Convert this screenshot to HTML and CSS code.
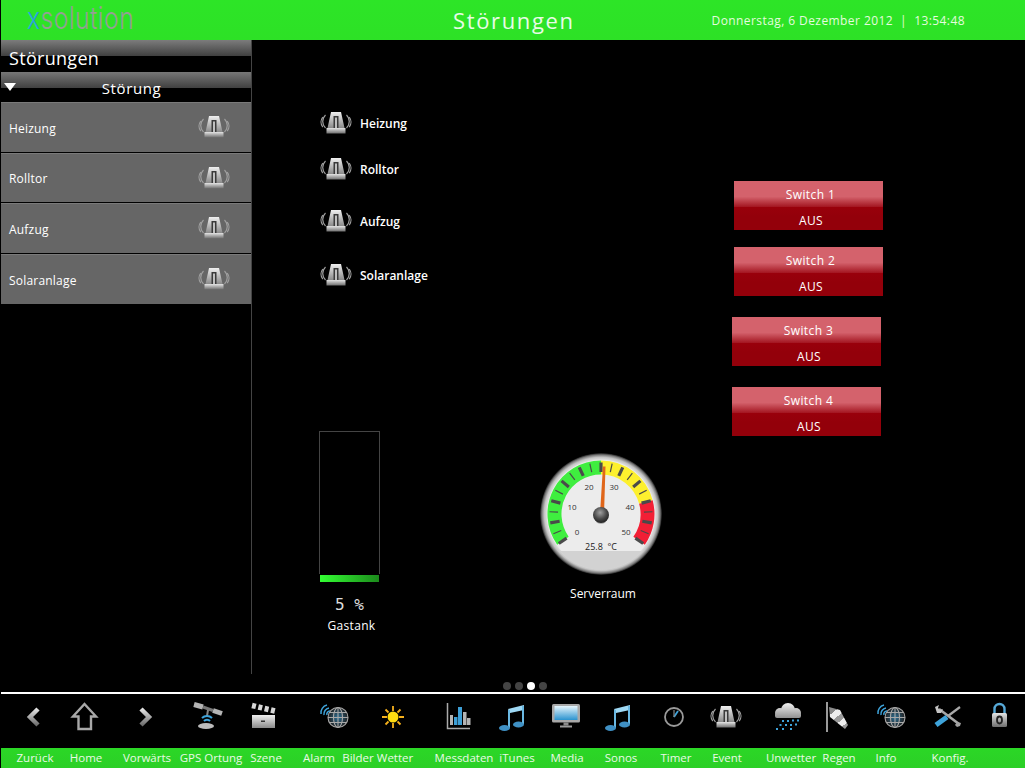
FILE: index.html
```html
<!DOCTYPE html>
<html lang="de">
<head>
<meta charset="utf-8">
<title>Störungen</title>
<link rel="stylesheet" href="styles.css">
</head>
<body>
<svg class="defs" width="0" height="0" aria-hidden="true">
  <defs>
    <linearGradient id="gGray" x1="0" y1="0" x2="0" y2="1"><stop offset="0" stop-color="#e4e4e4"/><stop offset="1" stop-color="#6e6e6e"/></linearGradient>
    <linearGradient id="gDome" x1="0" y1="0" x2="0" y2="1"><stop offset="0" stop-color="#f0f0f0"/><stop offset="1" stop-color="#8a8a8a"/></linearGradient>
    <linearGradient id="gBlue" x1="0" y1="0" x2="0" y2="1"><stop offset="0" stop-color="#a8dcf5"/><stop offset="1" stop-color="#2f86bd"/></linearGradient>
    <linearGradient id="gScreen" x1="0" y1="0" x2="0" y2="1"><stop offset="0" stop-color="#e6f5fc"/><stop offset="1" stop-color="#2a93cf"/></linearGradient>
    <linearGradient id="gCloud" gradientUnits="userSpaceOnUse" x1="0" y1="2" x2="0" y2="18"><stop offset="0" stop-color="#f2f2f2"/><stop offset="1" stop-color="#8b8b8b"/></linearGradient>
    <linearGradient id="gSock" gradientUnits="userSpaceOnUse" x1="10" y1="6" x2="27" y2="27"><stop offset="0" stop-color="#8a8a8a"/><stop offset=".2" stop-color="#8a8a8a"/><stop offset=".2" stop-color="#eee"/><stop offset=".42" stop-color="#eee"/><stop offset=".42" stop-color="#9a9a9a"/><stop offset=".62" stop-color="#9a9a9a"/><stop offset=".62" stop-color="#eee"/><stop offset=".82" stop-color="#eee"/><stop offset=".82" stop-color="#999"/></linearGradient>
    <radialGradient id="gGlobe" cx=".5" cy=".5" r=".5"><stop offset="0" stop-color="#2c6f94"/><stop offset="1" stop-color="#222"/></radialGradient>
    <radialGradient id="gHub" cx=".45" cy=".35" r=".65"><stop offset="0" stop-color="#a0a0a0"/><stop offset=".6" stop-color="#4a4a4a"/><stop offset="1" stop-color="#222"/></radialGradient>
    <radialGradient id="gRim" cx=".5" cy=".5" r=".5"><stop offset=".88" stop-color="#e6e6e6"/><stop offset=".93" stop-color="#c4c4c4"/><stop offset=".97" stop-color="#777"/><stop offset="1" stop-color="#111"/></radialGradient>

    <symbol id="i-siren" viewBox="0 0 32 32">
      <path d="M11 5h10l3.500 16h-17z" fill="url(#gDome)"/>
      <rect x="13.500" y="9" width="5" height="12" fill="#3a3a3a"/>
      <rect x="15" y="10.500" width="2" height="10.500" fill="#c0c0c0"/>
      <rect x="6.500" y="21" width="19" height="5.500" fill="url(#gGray)"/>
      <g fill="none" stroke="#a0a0a0" stroke-width="1.200">
        <path d="M5.500 8a9 9 0 0 0 0 13"/><path d="M2.800 10a8 8 0 0 0 0 10"/>
        <path d="M26.500 8a9 9 0 0 1 0 13"/><path d="M29.200 10a8 8 0 0 1 0 10"/>
      </g>
    </symbol>
    <symbol id="i-back" viewBox="0 0 32 32"><path d="M20 8l-8 8 8 8" fill="none" stroke="url(#gGray)" stroke-width="4.500"/></symbol>
    <symbol id="i-fwd" viewBox="0 0 32 32"><path d="M12 8l8 8-8 8" fill="none" stroke="url(#gGray)" stroke-width="4.500"/></symbol>
    <symbol id="i-home" viewBox="0 0 32 32"><path d="M15.500 3L27 15.500h-5V28H9.500V15.500H4z" fill="none" stroke="#a8a8a8" stroke-width="2.400"/></symbol>
    <symbol id="i-sat" viewBox="0 0 32 32">
      <path d="M2 3.500l9 2.500M21 9.500l9 3" stroke="#b4b4b4" stroke-width="5" fill="none"/>
      <path d="M11 6l10 3.500" stroke="#777" stroke-width="3" fill="none"/>
      <path d="M16 9l-1 6" stroke="#888" stroke-width="2" fill="none"/>
      <path d="M10 17a7 7 0 0 1 10 0M12 20a4 4 0 0 1 6 0" stroke="#3ea3da" stroke-width="2" fill="none"/>
      <ellipse cx="14" cy="25" rx="8" ry="3" fill="#bcbcbc"/>
    </symbol>
    <symbol id="i-clap" viewBox="0 0 32 32">
      <rect x="5" y="14" width="23" height="13" fill="url(#gDome)"/>
      <rect x="14" y="19.500" width="4" height="1.500" fill="#333"/>
      <path d="M5 4.500L28 10" stroke="#d8d8d8" stroke-width="5.500" stroke-dasharray="4 2.500" fill="none"/>
    </symbol>
    <symbol id="i-globe" viewBox="0 0 32 32">
      <circle cx="20" cy="16.500" r="10" fill="url(#gGlobe)"/>
      <g fill="none" stroke="#a8a8a8" stroke-width="1.100">
        <circle cx="20" cy="16.500" r="10"/>
        <ellipse cx="20" cy="16.500" rx="4.500" ry="10"/>
        <path d="M20 6.500v20M10 16.500h20M11.500 11.500h17M11.500 21.500h17"/>
      </g>
      <g fill="none" stroke="#3ea3da" stroke-width="1.500">
        <path d="M3 13a8 8 0 0 1 6-9"/><path d="M6 14a6 6 0 0 1 5-7"/><path d="M9 14a3 3 0 0 1 3-4"/>
      </g>
    </symbol>
    <symbol id="i-sun" viewBox="0 0 32 32">
      <g stroke-width="1.800">
        <path d="M16 5v5M16 22v5M5 16h5M22 16h5M8.500 8.500l3 3M20.500 20.500l3 3M8.500 23.500l3-3M20.500 11.500l3-3" stroke="#f6b01c"/>
      </g>
      <circle cx="16" cy="16" r="5.500" fill="#ffdc10"/>
    </symbol>
    <symbol id="i-chart" viewBox="0 0 32 32">
      <path d="M4.500 2v25.500H27" fill="none" stroke="#aaa" stroke-width="1.500"/>
      <rect x="7" y="14" width="3" height="10" fill="#b4b4b4"/>
      <rect x="11" y="16" width="3.500" height="8" fill="#3e9fd6"/>
      <rect x="15" y="6" width="4" height="18" fill="#3e9fd6"/>
      <rect x="20" y="11" width="3.500" height="13" fill="#b4b4b4"/>
      <rect x="24" y="17" width="3.500" height="7" fill="#b4b4b4"/>
    </symbol>
    <symbol id="i-note" viewBox="0 0 32 32">
      <path d="M12 8l16-4v5l-14 3z" fill="#9ed8f4"/>
      <rect x="12" y="9" width="2" height="18" fill="#6ab8e2"/>
      <rect x="26" y="5" width="2" height="18" fill="#6ab8e2"/>
      <ellipse cx="8.500" cy="27" rx="5.500" ry="3" fill="#3f90c4"/>
      <ellipse cx="22.500" cy="23.500" rx="5.500" ry="3" fill="#3f90c4"/>
    </symbol>
    <symbol id="i-monitor" viewBox="0 0 32 32">
      <rect x="2" y="3" width="28" height="18.500" rx="1.500" fill="#a8a8a8"/>
      <rect x="4.500" y="5" width="23" height="14" fill="url(#gScreen)"/>
      <rect x="13.500" y="21.500" width="5" height="3" fill="#8a8a8a"/>
      <rect x="10" y="24.500" width="12" height="2" fill="#9a9a9a"/>
    </symbol>
    <symbol id="i-clock" viewBox="0 0 32 32">
      <circle cx="16" cy="16" r="9" fill="none" stroke="#9a9a9a" stroke-width="1.800"/>
      <path d="M16 16l4-6" stroke="#3ea3da" stroke-width="1.800"/>
      <path d="M16 16V9" stroke="#888" stroke-width="1.200"/>
    </symbol>
    <symbol id="i-cloud" viewBox="0 0 32 32">
      <g fill="url(#gCloud)">
        <circle cx="8" cy="12" r="5"/><circle cx="16" cy="9" r="7"/><circle cx="24" cy="12" r="5"/>
        <rect x="3" y="12" width="26" height="5" rx="2"/>
      </g>
      <g fill="#3ea3da">
        <rect x="10" y="19" width="2" height="2"/><rect x="15" y="19" width="2" height="2"/><rect x="20" y="18.500" width="2" height="2"/><rect x="25" y="18.500" width="2" height="2"/>
        <rect x="7.500" y="23" width="2" height="2"/><rect x="13" y="23" width="2" height="2"/><rect x="18" y="23" width="2" height="2"/><rect x="23" y="22.500" width="2" height="2"/>
        <rect x="4" y="27" width="2" height="2"/><rect x="10" y="27" width="2" height="2"/><rect x="18" y="27" width="2" height="2"/>
      </g>
    </symbol>
    <symbol id="i-wind" viewBox="0 0 32 32">
      <path d="M6 1v30" stroke="#9a9a9a" stroke-width="2"/>
      <path d="M8 6l11 3 8 15-3 4L9 16z" fill="url(#gSock)"/>
    </symbol>
    <symbol id="i-tools" viewBox="0 0 32 32">
      <path d="M8 8l20 15" stroke="#a8a8a8" stroke-width="2.600" fill="none"/>
      <path d="M4 6l4-2-1 3 2 2 3-1-2 4-4 0z" fill="#c4c4c4"/>
      <path d="M26 21l4 1-1 3-3 1-2-2z" fill="#a0a0a0"/>
      <path d="M29 6L17 15" stroke="#a8a8a8" stroke-width="2.200" fill="none"/>
      <path d="M16 16L5 24" stroke="#3ea3da" stroke-width="5" fill="none"/>
    </symbol>
    <symbol id="i-lock" viewBox="0 0 32 32">
      <path d="M12.500 13V8a5 5 0 0 1 10 0v5" fill="none" stroke="#56a9d8" stroke-width="2.400"/>
      <rect x="10" y="12" width="15" height="14" rx="1.500" fill="url(#gGray)"/>
      <ellipse cx="17.500" cy="19" rx="2.500" ry="3.500" fill="none" stroke="#222" stroke-width="1.800"/>
    </symbol>
    <line id="tick-major" x1="61" y1="9.500" x2="61" y2="19" stroke="#4a4a4a" stroke-width="3.200"/>
    <line id="tick-minor" x1="61" y1="9.500" x2="61" y2="18" stroke="#4a4a4a" stroke-width="1.200"/>
  </defs>
</svg>

<header class="topbar">
  <div class="logo"><span class="logo-x">x</span>solution</div>
  <h1 class="page-title">Störungen</h1>
  <div class="clock">Donnerstag, 6 Dezember 2012&nbsp; | &nbsp;13:54:48</div>
</header>

<main class="main">
  <aside class="sidebar">
    <div class="side-title">Störungen</div>
    <div class="side-section"><span class="tri"></span>Störung</div>
    <div class="side-row"><span>Heizung</span><svg class="ico"><use href="#i-siren"/></svg></div>
    <div class="side-row"><span>Rolltor</span><svg class="ico"><use href="#i-siren"/></svg></div>
    <div class="side-row"><span>Aufzug</span><svg class="ico"><use href="#i-siren"/></svg></div>
    <div class="side-row"><span>Solaranlage</span><svg class="ico"><use href="#i-siren"/></svg></div>
  </aside>

  <section class="stage">
    <div class="alarm a1"><svg class="ico"><use href="#i-siren"/></svg><span>Heizung</span></div>
    <div class="alarm a2"><svg class="ico"><use href="#i-siren"/></svg><span>Rolltor</span></div>
    <div class="alarm a3"><svg class="ico"><use href="#i-siren"/></svg><span>Aufzug</span></div>
    <div class="alarm a4"><svg class="ico"><use href="#i-siren"/></svg><span>Solaranlage</span></div>

    <div class="switch s1"><div class="sw-top">Switch 1</div><div class="sw-bot">AUS</div></div>
    <div class="switch s2"><div class="sw-top">Switch 2</div><div class="sw-bot">AUS</div></div>
    <div class="switch s3"><div class="sw-top">Switch 3</div><div class="sw-bot">AUS</div></div>
    <div class="switch s4"><div class="sw-top">Switch 4</div><div class="sw-bot">AUS</div></div>

    <div class="tank">
      <div class="tank-frame"></div>
      <div class="tank-fill"></div>
      <div class="tank-val">5 %</div>
      <div class="tank-name">Gastank</div>
    </div>

    <div class="gauge">
      <svg class="gauge-svg" width="122" height="122" viewBox="0 0 122 122">
        <circle cx="61" cy="61" r="61" fill="url(#gRim)"/>
        <circle cx="61" cy="61" r="54" fill="#ececec"/>
        <path d="M22.900 87.700A46.500 46.500 0 0 1 61 14.500" fill="none" stroke="#3fee3f" stroke-width="14"/>
        <path d="M61 14.500A46.500 46.500 0 0 1 105.900 49" fill="none" stroke="#fdf02e" stroke-width="14"/>
        <path d="M105.900 49A46.500 46.500 0 0 1 99.100 87.700" fill="none" stroke="#f21f35" stroke-width="14"/>
        <g>
          <use href="#tick-major" transform="rotate(-125 61 61)"/><use href="#tick-minor" transform="rotate(-112.500 61 61)"/>
          <use href="#tick-major" transform="rotate(-100 61 61)"/><use href="#tick-minor" transform="rotate(-87.500 61 61)"/>
          <use href="#tick-major" transform="rotate(-75 61 61)"/><use href="#tick-minor" transform="rotate(-62.500 61 61)"/>
          <use href="#tick-major" transform="rotate(-50 61 61)"/><use href="#tick-minor" transform="rotate(-37.500 61 61)"/>
          <use href="#tick-major" transform="rotate(-25 61 61)"/><use href="#tick-minor" transform="rotate(-12.500 61 61)"/>
          <use href="#tick-major"/><use href="#tick-minor" transform="rotate(12.500 61 61)"/>
          <use href="#tick-major" transform="rotate(25 61 61)"/><use href="#tick-minor" transform="rotate(37.500 61 61)"/>
          <use href="#tick-major" transform="rotate(50 61 61)"/><use href="#tick-minor" transform="rotate(62.500 61 61)"/>
          <use href="#tick-major" transform="rotate(75 61 61)"/><use href="#tick-minor" transform="rotate(87.500 61 61)"/>
          <use href="#tick-major" transform="rotate(100 61 61)"/><use href="#tick-minor" transform="rotate(112.500 61 61)"/>
          <use href="#tick-major" transform="rotate(125 61 61)"/>
        </g>
        <path d="M20 98h82A55 55 0 0 1 20 98z" fill="#d2d2d2"/>
        <g class="gauge-num">
          <text x="37" y="82">0</text><text x="32" y="57">10</text><text x="49" y="37">20</text>
          <text x="74" y="37">30</text><text x="90" y="57">40</text><text x="86" y="82">50</text>
        </g>
        <text class="gauge-read" x="61" y="97">25.8 &#160;°C</text>
        <path d="M60 61L63 13.500h2.500L64 61z" fill="#e0661a"/>
        <ellipse cx="61" cy="68" rx="5" ry="3" fill="#888" opacity=".6"/>
        <circle cx="61" cy="62" r="8" fill="url(#gHub)"/>
      </svg>
      <div class="gauge-name">Serverraum</div>
    </div>
  </section>

  <div class="dots"><i></i><i></i><i class="on"></i><i></i></div>
</main>

<nav class="toolbar">
  <div class="iconrow">
    <div class="cell"><svg class="tb"><use href="#i-back"/></svg></div>
    <div class="cell"><svg class="tb"><use href="#i-home"/></svg></div>
    <div class="cell"><svg class="tb"><use href="#i-fwd"/></svg></div>
    <div class="cell"><svg class="tb"><use href="#i-sat"/></svg></div>
    <div class="cell"><svg class="tb"><use href="#i-clap"/></svg></div>
    <div class="cell"><svg class="tb"><use href="#i-globe"/></svg></div>
    <div class="cell"><svg class="tb"><use href="#i-sun"/></svg></div>
    <div class="cell"><svg class="tb"><use href="#i-chart"/></svg></div>
    <div class="cell"><svg class="tb"><use href="#i-note"/></svg></div>
    <div class="cell"><svg class="tb"><use href="#i-monitor"/></svg></div>
    <div class="cell"><svg class="tb"><use href="#i-note"/></svg></div>
    <div class="cell"><svg class="tb"><use href="#i-clock"/></svg></div>
    <div class="cell"><svg class="tb"><use href="#i-siren"/></svg></div>
    <div class="cell"><svg class="tb"><use href="#i-cloud"/></svg></div>
    <div class="cell"><svg class="tb"><use href="#i-wind"/></svg></div>
    <div class="cell"><svg class="tb"><use href="#i-globe"/></svg></div>
    <div class="cell"><svg class="tb"><use href="#i-tools"/></svg></div>
    <div class="cell"><svg class="tb"><use href="#i-lock"/></svg></div>
  </div>
  <div class="labelrow">
    <div class="cell"><span>Zurück</span></div>
    <div class="cell"><span>Home</span></div>
    <div class="cell"><span>Vorwärts</span></div>
    <div class="cell"><span>GPS Ortung</span></div>
    <div class="cell"><span>Szene</span></div>
    <div class="cell"><span>Alarm</span></div>
    <div class="cell"><span>Bilder</span></div>
    <div class="cell"><span>Wetter</span></div>
    <div class="cell"><span>Messdaten</span></div>
    <div class="cell"><span>iTunes</span></div>
    <div class="cell"><span>Media</span></div>
    <div class="cell"><span>Sonos</span></div>
    <div class="cell"><span>Timer</span></div>
    <div class="cell"><span>Event</span></div>
    <div class="cell"><span>Unwetter</span></div>
    <div class="cell"><span>Regen</span></div>
    <div class="cell"><span>Info</span></div>
    <div class="cell"><span>Konfig.</span></div>
  </div>
</nav>
</body>
</html>
```
FILE: styles.css
```css
* { box-sizing: border-box; }
html, body { margin: 0; height: 100%; background: #000; }
body {
  width: 1025px;
  height: 768px;
  overflow: hidden;
  display: flex;
  flex-direction: column;
  color: #fff;
  font-family: "Open Sans", "Noto Sans", "Liberation Sans", sans-serif;
  font-size: 12px;
}
.defs { position: absolute; }

/* top bar */
.topbar {
  flex: 0 0 40px;
  margin-left: 1px;
  display: flex;
  align-items: center;
  position: relative;
  background: linear-gradient(#2de527, #2de126);
}
.logo {
  margin-left: 26px;
  margin-top: -4px;
  font-family: Inter, "Liberation Sans", sans-serif;
  font-weight: 300;
  font-size: 31px;
  line-height: 36px;
  letter-spacing: .5px;
  color: #94a094;
  transform: scaleX(.8);
  transform-origin: left center;
}
.logo-x { color: #2a9fe0; }
.page-title {
  position: absolute;
  left: 452px;
  top: 5px;
  margin: 0;
  font-size: 22px;
  line-height: 30px;
  font-weight: normal;
  letter-spacing: 1.650px;
  color: #e8fbe6;
}
.clock {
  margin-left: auto;
  margin-right: 60px;
  font-size: 12px;
  letter-spacing: .42px;
  color: #e4fbdf;
}

/* main */
.main { flex: 0 0 652px; display: flex; align-items: flex-start; position: relative; }
.sidebar {
  flex: 0 0 252px;
  height: 634px;
  padding-left: 1px;
  border-right: 1px solid #444;
}
.side-title { height: 32px; padding: 6px 0 0 8px; font-size: 18px; line-height: 24px; letter-spacing: .3px; background: linear-gradient(#7c7c7c, #404040 50%, #000 50%); }
.side-section {
  height: 30px;
  position: relative;
  background: linear-gradient(#777, #414141 53%, #000 53%);
  text-align: center;
  font-size: 15px;
  line-height: 20px;
  padding-top: 6px;
  padding-left: 11px;
  letter-spacing: .6px;
}
.tri {
  position: absolute;
  left: 3px;
  top: 11px;
  border-left: 6px solid transparent;
  border-right: 6px solid transparent;
  border-top: 8px solid #fff;
}
.side-row {
  height: 50.500px;
  display: flex;
  align-items: center;
  justify-content: space-between;
  padding: 0 21px 0 8px;
  background: #666;
  border-top: 1px solid #7a7a7a;
  border-bottom: 1px solid #000;
  font-size: 12px;
  letter-spacing: .2px;
}
.side-row span { padding-top: 2px; }
.side-row:last-child { border-bottom: 0; }
.ico { width: 32px; height: 32px; flex: none; }

/* free canvas */
.stage { flex: 1; align-self: stretch; position: relative; }
.alarm { position: absolute; left: 68px; display: flex; align-items: center; gap: 8px; font-size: 12px; font-weight: 600; }
.alarm span { padding-top: 1px; }
.a1 { top: 67px; }
.a2 { top: 113px; }
.a3 { top: 165px; }
.a4 { top: 219px; }

.switch { position: absolute; width: 149px; height: 49px; text-align: center; font-size: 12px; letter-spacing: .4px; }
.s1 { left: 482px; top: 141px; }
.s2 { left: 482px; top: 207px; }
.s3 { left: 480px; top: 277px; }
.s4 { left: 480px; top: 347px; }
.sw-top { height: 26px; line-height: 27px; padding-left: 4px; background: linear-gradient(#d4626c 0, #d4626c 60%, #a31520 100%); }
.sw-bot { height: 23px; line-height: 27px; padding-left: 5px; background: linear-gradient(#99000b 0, #93000a 40%); }

.tank { position: absolute; left: 67px; top: 391px; width: 61px; text-align: center; }
.tank-frame { height: 143px; border: 1px solid #444; border-bottom: 0; }
.tank-fill { height: 7px; margin: 1px 1px 0; background: linear-gradient(90deg, #33ff33, #1c8a1c); }
.tank-val { margin-top: 13px; font-family: "DejaVu Sans Mono", monospace; font-size: 16px; line-height: 20px; color: #ddd; }
.tank-name { margin: 3px -20px 0 -16px; font-size: 12px; line-height: 16px; letter-spacing: .3px; }

.gauge { position: absolute; left: 288px; top: 413px; width: 122px; text-align: center; }
.gauge-svg { display: block; }
.gauge-num text { font-size: 8px; fill: #333; text-anchor: middle; font-family: "Open Sans", sans-serif; }
.gauge-read { font-size: 9px; fill: #222; text-anchor: middle; font-family: "Open Sans", sans-serif; }
.gauge-name { margin: 11px -20px 0 -16px; font-size: 12px; line-height: 16px; }

.dots { position: absolute; left: 503px; bottom: 2px; display: flex; gap: 4px; }
.dots i { width: 8px; height: 8px; border-radius: 50%; background: #444; }
.dots i.on { background: #fff; }

/* toolbar */
.toolbar { flex: 1; margin-left: 1px; border-top: 2px solid #fff; display: flex; flex-direction: column; }
.iconrow, .labelrow { display: grid; }
.iconrow {
  flex: 1;
  padding-left: 33px;
  grid-template-columns: 51px 60px 63px 55px 71px 59px 66px 53px 54px 52px 56px 52px 62px 49px 54px 56px 51px 1fr;
  align-items: center;
  padding-bottom: 8px;
}
.labelrow {
  flex: 0 0 20px;
  padding: 0 0 2px 34px;
  grid-template-columns: 51px 61px 64px 55px 53px 39px 37px 69px 53px 50px 54px 55px 51px 64px 48px 47px 64px 1fr;
  align-items: center;
  font-size: 11.500px;
  color: #eaf9e6;
  background: linear-gradient(#2bd726, #2ccf27);
}
.cell { width: 0; display: flex; justify-content: center; }
.cell span { white-space: nowrap; }
.tb { width: 32px; height: 32px; flex: none; }
```
